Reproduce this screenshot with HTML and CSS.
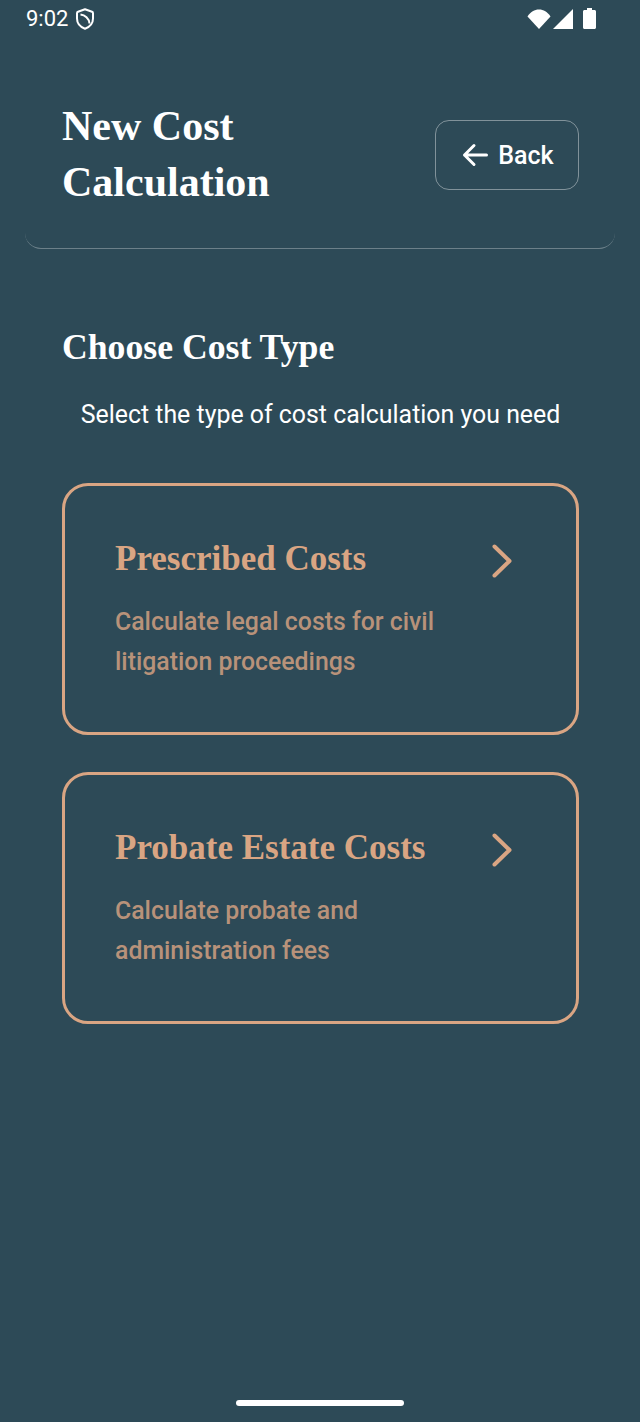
FILE: index.html
```html
<!DOCTYPE html>
<html lang="en">
<head>
  <meta charset="UTF-8">
  <meta name="viewport" content="width=device-width, initial-scale=1.0">
  <title>New Cost Calculation</title>
  <link rel="stylesheet" href="styles.css">
</head>
<body>
  <div class="screen">
    <div class="status-bar">
      <div class="status-left">
        <span class="time">9:02</span>
        <svg class="shield" viewBox="0 0 18 22" width="18" height="22">
          <path d="M9 1.3 L16 3.8 C16.6 4 17 4.5 17 5.2 V10.5 C17 15.2 13.6 19 9 20.7 C4.4 19 1 15.2 1 10.5 V5.2 C1 4.5 1.4 4 2 3.8 Z" fill="none" stroke="#fff" stroke-width="2" stroke-linejoin="round"/>
          <path d="M4.5 6.5 C9 7 13 10.5 13.5 15.5" fill="none" stroke="#fff" stroke-width="2"/>
        </svg>
      </div>
      <div class="status-right">
        <svg viewBox="0 0 24 20" width="24" height="20"><path d="M0.5 7.5 C3.5 2.8 7.5 0.5 12 0.5 C16.5 0.5 20.5 2.8 23.5 7.5 L12 20 Z" fill="#fff"/></svg>
        <svg viewBox="0 0 20 20" width="20" height="20"><path d="M0 20 L20 0 V20 Z" fill="#fff"/></svg>
        <svg class="battery" viewBox="0 0 13 21" width="13" height="21"><path d="M4 0 H9 V2 H11.5 C12.3 2 13 2.7 13 3.5 V19.5 C13 20.3 12.3 21 11.5 21 H1.5 C0.7 21 0 20.3 0 19.5 V3.5 C0 2.7 0.7 2 1.5 2 H4 Z" fill="#fff"/></svg>
      </div>
    </div>

    <div class="header">
      <h1>New Cost Calculation</h1>
      <button class="back-btn">
        <svg viewBox="0 0 26 24" width="26" height="24"><path d="M24.5 12 H2.5 M12 2.5 L2.5 12 L12 21.5" fill="none" stroke="#fff" stroke-width="3" stroke-linecap="round" stroke-linejoin="round"/></svg>
        <span>Back</span>
      </button>
    </div>

    <div class="content">
      <h2>Choose Cost Type</h2>
      <p class="subtitle">Select the type of cost calculation you need</p>

      <div class="card">
        <div class="card-text">
          <h3>Prescribed Costs</h3>
          <p>Calculate legal costs for civil litigation proceedings</p>
        </div>
        <svg class="chevron" viewBox="0 0 20 34" width="20" height="34"><path d="M2.5 2.5 L17.5 17 L2.5 31.5" fill="none" stroke="#d9a583" stroke-width="4" stroke-linecap="round" stroke-linejoin="round"/></svg>
      </div>

      <div class="card">
        <div class="card-text">
          <h3>Probate Estate Costs</h3>
          <p>Calculate probate and administration fees</p>
        </div>
        <svg class="chevron" viewBox="0 0 20 34" width="20" height="34"><path d="M2.5 2.5 L17.5 17 L2.5 31.5" fill="none" stroke="#d9a583" stroke-width="4" stroke-linecap="round" stroke-linejoin="round"/></svg>
      </div>
    </div>

    <div class="home-bar"></div>
  </div>
</body>
</html>
```

FILE: styles.css
```css
body {
  margin: 0;
  background-color: #2d4a57;
  font-family: Roboto, sans-serif;
  color: white;
}

.screen {
  display: flex;
  flex-direction: column;
  height: 1422px;
  overflow: hidden;
}

.status-bar {
  display: flex;
  justify-content: space-between;
  align-items: center;
  height: 37px;
  padding: 0 44px 0 26px;
}

.status-left {
  display: flex;
  align-items: center;
  gap: 8px;
}

.time {
  font-size: 22px;
}

.status-right {
  display: flex;
  align-items: center;
  gap: 2px;
}

.battery {
  margin-left: 8px;
}

.header {
  display: flex;
  justify-content: space-between;
  align-items: center;
  margin: 0 25px;
  padding: 61px 36px 38px 37px;
  border-bottom: 1px solid rgba(255, 255, 255, 0.3);
  border-radius: 0 0 16px 16px;
}

h1 {
  width: 300px;
  margin: 0;
  font-family: "Liberation Serif", serif;
  font-size: 42px;
  line-height: 56px;
  font-weight: bold;
}

.back-btn {
  display: flex;
  align-items: center;
  justify-content: center;
  gap: 10px;
  width: 144px;
  height: 70px;
  margin-top: 2px;
  padding: 0 0 0 2px;
  background: none;
  border: 1.5px solid rgba(255, 255, 255, 0.4);
  border-radius: 14px;
  color: white;
  font-family: Roboto, sans-serif;
  font-size: 25px;
  font-weight: 500;
}

.content {
  flex: 1;
  padding: 0 61px 0 62px;
}

h2 {
  margin: 76px 0 0 0;
  font-family: "Liberation Serif", serif;
  font-size: 35.7px;
  line-height: 44px;
  font-weight: bold;
}

.subtitle {
  margin: 30px 0 0 0;
  text-align: center;
  font-size: 24.9px;
  line-height: 32px;
}

.card {
  display: flex;
  justify-content: space-between;
  align-items: flex-start;
  box-sizing: border-box;
  height: 252px;
  margin-bottom: 37px;
  padding: 50px 64px 0 50px;
  border: 3px solid #d9a583;
  border-radius: 26px;
}

.subtitle + .card {
  margin-top: 52px;
}

.card-text {
  width: 340px;
}

h3 {
  margin: 0;
  font-family: "Liberation Serif", serif;
  font-size: 35px;
  line-height: 46px;
  font-weight: bold;
  color: #d9a583;
  white-space: nowrap;
}

.card p {
  margin: 20px 0 0 0;
  font-size: 24.85px;
  line-height: 40px;
  font-weight: 500;
  color: #b8927a;
}

.chevron {
  margin-top: 8px;
  flex-shrink: 0;
}

.home-bar {
  align-self: center;
  width: 168px;
  height: 6px;
  margin-bottom: 16px;
  background-color: white;
  border-radius: 3px;
}
```
